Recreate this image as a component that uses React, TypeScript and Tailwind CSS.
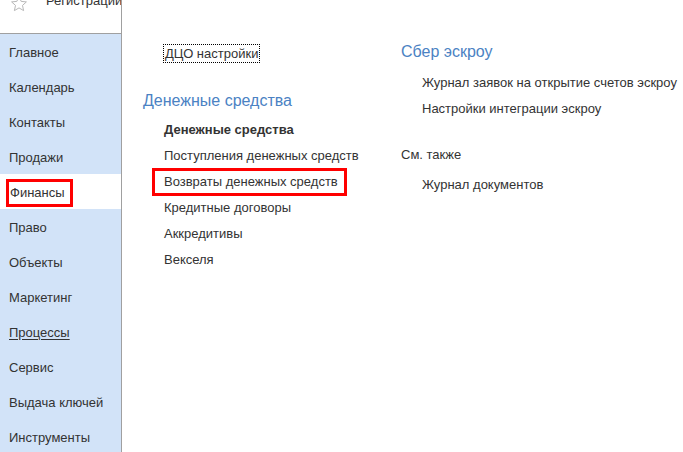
import React from "react";

const nav = [
  "Главное",
  "Календарь",
  "Контакты",
  "Продажи",
  "Финансы",
  "Право",
  "Объекты",
  "Маркетинг",
  "Процессы",
  "Сервис",
  "Выдача ключей",
  "Инструменты",
];

export default function App() {
  return (
    <div
      className="w-[683px] h-[452px] overflow-hidden flex bg-white text-[13px] text-[#333333]"
      style={{ fontFamily: '"Liberation Sans", Arial, sans-serif' }}
    >
      <div className="w-[122px] shrink-0 flex flex-col border-r border-[#a0a0a0] bg-[#d2e3f8]">
        <div className="h-[34px] shrink-0 bg-white border-b border-[#a0a0a0] flex items-start relative overflow-hidden">
          <svg className="absolute left-[10px] top-[-5px]" width="18" height="18" viewBox="0 0 18 18">
            <path
              d="M9 1.5 L11.2 6.4 L16.4 6.9 L12.5 10.4 L13.6 15.6 L9 12.9 L4.4 15.6 L5.5 10.4 L1.6 6.9 L6.8 6.4 Z"
              fill="none"
              stroke="#b8b8b8"
              strokeWidth="1"
              strokeLinejoin="round"
            />
          </svg>
          <span className="absolute left-[46px] top-[-9px] whitespace-nowrap text-[#333] text-[13px]">Регистрации</span>
        </div>
        <div className="flex flex-col">
          {nav.map((n) => (
            <div
              key={n}
              className={
                "h-[35px] shrink-0 flex items-center pl-[9px] pt-[2px] " +
                (n === "Финансы" ? "bg-white" : "")
              }
            >
              {n === "Финансы" ? (
                <span className="border-[3px] border-[#ff0000] px-[1px] h-[28px] flex items-center ml-[-3px] w-[67px]">
                  {n}
                </span>
              ) : n === "Процессы" ? (
                <span className="underline underline-offset-2">{n}</span>
              ) : (
                <span>{n}</span>
              )}
            </div>
          ))}
        </div>
      </div>
      <div className="flex-1 flex pl-[21px] pt-[44px]">
        <div className="w-[258px] shrink-0 flex flex-col">
          <div className="pl-[20px]">
            <span className="border border-dotted border-black px-[1px] leading-[17px] inline-block">ДЦО настройки</span>
          </div>
          <div className="mt-[27px] text-[16px] text-[#4b82c3] leading-[20px]">Денежные средства</div>
          <div className="pl-[21px] flex flex-col mt-[6px]">
            <div className="h-[26px] flex items-center font-bold">Денежные средства</div>
            <div className="h-[26px] flex items-center">Поступления денежных средств</div>
            <div className="h-[26px] flex items-center">
              <span className="border-[3px] border-[#ff0000] h-[28px] w-[195px] ml-[-12px] pl-[9px] flex items-center">
                Возвраты денежных средств
              </span>
            </div>
            <div className="h-[26px] flex items-center">Кредитные договоры</div>
            <div className="h-[26px] flex items-center">Аккредитивы</div>
            <div className="h-[26px] flex items-center">Векселя</div>
          </div>
        </div>
        <div className="flex flex-col">
          <div className="text-[16px] text-[#4b82c3] leading-[20px] mt-[-2px]">Сбер эскроу</div>
          <div className="pl-[21px] flex flex-col mt-[8px]">
            <div className="h-[26px] flex items-center">Журнал заявок на открытие счетов эскроу</div>
            <div className="h-[26px] flex items-center">Настройки интеграции эскроу</div>
          </div>
          <div className="mt-[20px] h-[26px] flex items-center">См. также</div>
          <div className="pl-[21px] flex flex-col mt-[4px]">
            <div className="h-[26px] flex items-center">Журнал документов</div>
          </div>
        </div>
      </div>
    </div>
  );
}
